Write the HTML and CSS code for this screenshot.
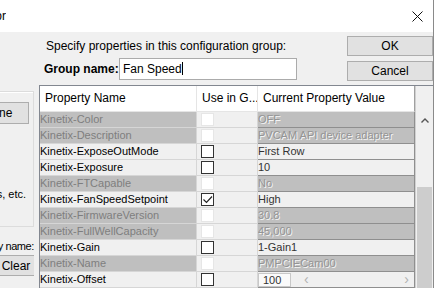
FILE: index.html
```html
<!DOCTYPE html>
<html lang="en">
    <head>
        <meta charset="UTF-8" />
        <title>Group Editor</title>
        <link rel="stylesheet" href="styles.css">
    </head>
    <body>
        <div class="window">
            <div class="titlebar">
                <div class="title-clip"><span class="title">Group Editor</span></div>
                <svg class="close" width="11" height="11" viewBox="0 0 11 11">
                    <path d="M0.5 0.5 L10.5 10.5 M10.5 0.5 L0.5 10.5" stroke="#111" stroke-width="1" fill="none" />
                </svg>
            </div>

            <div class="dialog">
                <div class="side">
                    <div class="side-inner">
                        <div class="filter-box">
                            <button class="btn btn-none">None</button>
                            <div class="hint">adapters, etc.</div>
                        </div>
                        <div class="filter-label">Filter by name:</div>
                        <button class="btn btn-clear">Clear</button>
                    </div>
                </div>

                <div class="content">
                    <div class="top">
                        <div class="form">
                            <div class="intro">Specify properties in this configuration group:</div>
                            <div class="name-row">
                                <label class="name-label">Group name:</label>
                                <div class="name-input">Fan Speed<span class="caret"></span></div>
                            </div>
                        </div>
                        <div class="buttons">
                            <button class="btn">OK</button>
                            <button class="btn">Cancel</button>
                        </div>
                    </div>

                    <div class="grid">
                        <div class="rows">
                            <div class="row head">
                                <div class="cell">Property Name</div>
                                <div class="cell">Use in G...</div>
                                <div class="cell">Current Property Value</div>
                            </div>
                            <div class="row off">
                                <div class="cell name">Kinetix-Color</div>
                                <div class="cell use"><span class="box"></span></div>
                                <div class="cell value">OFF</div>
                            </div>
                            <div class="row off">
                                <div class="cell name">Kinetix-Description</div>
                                <div class="cell use"><span class="box"></span></div>
                                <div class="cell value">PVCAM API device adapter</div>
                            </div>
                            <div class="row">
                                <div class="cell name">Kinetix-ExposeOutMode</div>
                                <div class="cell use"><span class="box"></span></div>
                                <div class="cell value">First Row</div>
                            </div>
                            <div class="row">
                                <div class="cell name">Kinetix-Exposure</div>
                                <div class="cell use"><span class="box"></span></div>
                                <div class="cell value">10</div>
                            </div>
                            <div class="row off">
                                <div class="cell name">Kinetix-FTCapable</div>
                                <div class="cell use"><span class="box"></span></div>
                                <div class="cell value">No</div>
                            </div>
                            <div class="row">
                                <div class="cell name">Kinetix-FanSpeedSetpoint</div>
                                <div class="cell use">
                                    <span class="box">
                                        <svg width="11" height="11" viewBox="0 0 11 11">
                                            <polyline points="1.5,5.5 4.5,8.5 10,2.5" stroke="#222" stroke-width="1.2" fill="none" />
                                        </svg>
                                    </span>
                                </div>
                                <div class="cell value">High</div>
                            </div>
                            <div class="row off">
                                <div class="cell name">Kinetix-FirmwareVersion</div>
                                <div class="cell use"><span class="box"></span></div>
                                <div class="cell value">30.8</div>
                            </div>
                            <div class="row off">
                                <div class="cell name">Kinetix-FullWellCapacity</div>
                                <div class="cell use"><span class="box"></span></div>
                                <div class="cell value">45,000</div>
                            </div>
                            <div class="row">
                                <div class="cell name">Kinetix-Gain</div>
                                <div class="cell use"><span class="box"></span></div>
                                <div class="cell value">1-Gain1</div>
                            </div>
                            <div class="row off">
                                <div class="cell name">Kinetix-Name</div>
                                <div class="cell use"><span class="box"></span></div>
                                <div class="cell value">PMPCIECam00</div>
                            </div>
                            <div class="row">
                                <div class="cell name">Kinetix-Offset</div>
                                <div class="cell use"><span class="box"></span></div>
                                <div class="cell value slider">
                                    <span class="num">100</span>
                                    <span class="arrow">&lsaquo;</span>
                                    <span class="arrow">&rsaquo;</span>
                                </div>
                            </div>
                            <div class="row">
                                <div class="cell name">Kinetix-PMode</div>
                                <div class="cell use"><span class="box"></span></div>
                                <div class="cell value">Normal</div>
                            </div>
                        </div>

                        <div class="vscroll">
                            <div class="corner"></div>
                            <div class="up">
                                <svg width="8" height="5" viewBox="0 0 8 5">
                                    <polyline points="0.5,4.5 4,1 7.5,4.5" stroke="#555" stroke-width="1.4" fill="none" />
                                </svg>
                            </div>
                            <div class="track"></div>
                            <div class="thumb"></div>
                        </div>
                    </div>
                </div>
            </div>
        </div>
    </body>
</html>
```

FILE: styles.css
```css
* {
    box-sizing: border-box;
}

body {
    margin: 0;
    width: 439px;
    height: 288px;
    overflow: hidden;
    background-color: #fff;
    font-family: "Liberation Sans", Arial, sans-serif;
    font-size: 12px;
    color: #000;
}

.window {
    width: 434px;
    height: 288px;
    background-color: #f0f0f0;
    border-right: 1px solid #8a8a8a;
}

.btn {
    font-family: "Liberation Sans", Arial, sans-serif;
    font-size: 12px;
    color: #000;
    background-color: #e1e1e1;
    border: 1px solid #adadad;
    border-radius: 0;
    height: 20px;
    padding: 0;
    margin: 0;
}

/* title bar */

.titlebar {
    height: 32px;
    background-color: #fff;
    display: flex;
    align-items: center;
}

.title-clip {
    width: 6px;
    overflow: hidden;
    display: flex;
    justify-content: flex-end;
    white-space: nowrap;
}

.title {
    flex-shrink: 0;
    font-size: 12px;
}

.close {
    margin-left: auto;
    margin-right: 10px;
    margin-top: 1px;
}

/* dialog body */

.dialog {
    display: flex;
    height: 256px;
}

.side {
    width: 34px;
    overflow: hidden;
    flex-shrink: 0;
}

.side-inner {
    width: 120px;
    margin-left: -86px;
    padding-top: 59px;
}

.filter-box {
    height: 136px;
    border: 1px solid #dcdcdc;
    box-shadow: inset 1px 1px 0 #fff;
    padding-top: 10px;
    display: flex;
    flex-direction: column;
    align-items: flex-end;
}

.btn-none {
    width: 62px;
    height: 22px;
    margin-right: 4px;
}

.hint {
    margin-top: 64px;
    margin-right: 7px;
    font-size: 11px;
    white-space: nowrap;
}

.filter-label {
    margin-top: 12px;
    text-align: right;
    white-space: nowrap;
    line-height: 14px;
    font-size: 11px;
    letter-spacing: -0.4px;
}

.btn-clear {
    display: block;
    width: 38px;
    height: 21px;
    margin-top: 2px;
    margin-left: auto;
    margin-right: -1px;
}

.content {
    width: 394px;
    margin-left: 5px;
    padding-top: 4px;
    display: flex;
    flex-direction: column;
}

.top {
    display: flex;
    justify-content: space-between;
    height: 49px;
    flex-shrink: 0;
}

.form {
    padding-left: 5px;
}

.intro {
    margin-top: 3px;
    margin-left: 2px;
    line-height: 14px;
}

.name-row {
    display: flex;
    align-items: center;
    margin-top: 5px;
}

.name-label {
    font-weight: bold;
    width: 75px;
}

.name-input {
    width: 178px;
    height: 22px;
    background-color: #fff;
    border: 1px solid #ababab;
    padding: 3px 3px 0;
    font-size: 12px;
}

.caret {
    display: inline-block;
    width: 1px;
    height: 13px;
    background-color: #000;
    vertical-align: -2px;
}

.buttons {
    width: 86px;
    display: flex;
    flex-direction: column;
    gap: 5px;
}

/* property table */

.grid {
    flex: 1;
    display: flex;
    border-left: 1px solid #828790;
    border-top: 1px solid #828790;
    background-color: #f0f0f0;
    overflow: hidden;
}

.rows {
    width: 375px;
    flex-shrink: 0;
}

.row {
    display: grid;
    grid-template-columns: 157px 61px 157px;
    height: 16px;
    font-size: 11px;
    line-height: 15px;
}

.cell {
    border-right: 1px solid #d6d6d6;
    border-bottom: 1px solid #d6d6d6;
    white-space: nowrap;
    overflow: hidden;
}

.row.head {
    height: 26px;
    line-height: 25px;
    background-color: #fff;
}

.row.head .cell {
    padding-left: 5px;
    border-color: #e5e5e5;
    font-size: 12px;
}

.row.head .cell:last-child {
    border-right-color: #a0a0a0;
}

.name {
    background-color: #f0f0f0;
}

.use {
    padding: 0 0 0 4px;
}

.box {
    display: block;
    width: 13px;
    height: 13px;
    margin-top: 1px;
    background-color: #fff;
    border: 1px solid #333;
}

.box svg {
    display: block;
}

.value {
    background-color: #f0f0f0;
    border-color: #8f8f8f;
    color: #333;
}

.row.off .name {
    background-color: #bfbfbf;
    color: #7e7e7e;
}

.row.off .box {
    border-color: #e6e6e6;
}

.row.off .value {
    background-color: #bfbfbf;
    color: #949494;
    text-shadow: 1px 1px 0 #f4f4f4;
}

.slider {
    display: flex;
    align-items: center;
}

.num {
    width: 33px;
    height: 14px;
    line-height: 13px;
    border: 1px solid #c8c8c8;
    background-color: #fafafa;
    padding-left: 4px;
}

.arrow {
    color: #b0b0b0;
    font-size: 14px;
    margin-left: 13px;
}

.arrow:last-child {
    margin-left: auto;
    margin-right: 5px;
}

.vscroll {
    width: 18px;
    display: flex;
    flex-direction: column;
    border-left: 1px solid #d0d0d0;
}

.corner {
    height: 26px;
    flex-shrink: 0;
}

.up {
    height: 17px;
    flex-shrink: 0;
    display: flex;
    justify-content: center;
    align-items: center;
}

.track {
    height: 58px;
    flex-shrink: 0;
}

.thumb {
    flex: 1;
    margin: 0 1px 0 1px;
    background-color: #cdcdcd;
}
```
